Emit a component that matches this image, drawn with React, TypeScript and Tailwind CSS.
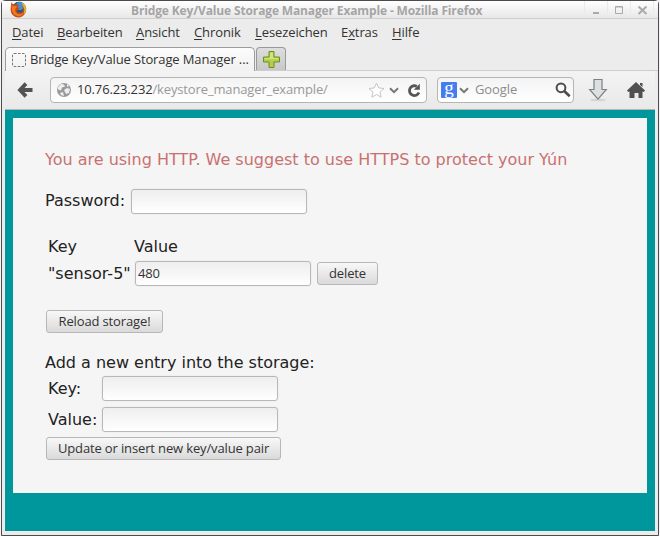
import React from "react";

const field =
  "h-[25px] w-[176px] shrink-0 rounded-[3px] border border-[#b8b8b8] bg-gradient-to-b from-[#eeeeee] to-white px-[2px] pb-[2px] text-[13px] tracking-[-0.14px] text-[#333] shadow-[0_0_0_1px_#f0f0f0] outline-none font-['Open_Sans',sans-serif]";
const button =
  "h-[23px] shrink-0 whitespace-nowrap rounded-[3px] border border-[#b7b7b7] bg-gradient-to-b from-[#f8f8f8] to-[#dadada] text-center text-[13px] leading-[21px] tracking-[-0.14px] text-[#333] font-['Open_Sans',sans-serif]";

function Firefox() {
  return (
    <svg width="17" height="17" viewBox="0 0 17 17" className="shrink-0">
      <circle cx="9" cy="8" r="7.2" fill="#234f8f" />
      <circle cx="10" cy="5" r="4.2" fill="#4b8fc8" />
      <path d="M1.3 1.2 3.2 3.4 6.2 3 8.6 4.2 7.5 6.2 9.6 7.2 7.6 9.6 6.4 10.2 8 11.6 11.8 11.5 13.4 8.2 12.6 4.8 15.8 8.2C16 13 13 16.2 8.6 16.4 3.2 16.3.4 12.2.6 7.4Z" fill="#c54a17" />
      <path d="M1.4 2.8 3 5.2 5.8 4.8 7.2 5.8 5.4 7.6 5.2 10.4 7.5 13 11 13.2 14 11 12.5 14 8.5 15.4 4 13.4 2 9.8Z" fill="#ee7c1d" />
      <path d="M11.5 1.3 14.8 3.6 16.3 7.3 15.8 11 13.8 13.4 14.3 8.3 12.8 4.4Z" fill="#edab30" />
    </svg>
  );
}

function Menu({ w, pre = "", hot, rest }: { w: string; pre?: string; hot: string; rest: string }) {
  return (
    <span className={w + " shrink-0 whitespace-nowrap"}>
      {pre}
      <span className="underline decoration-1 underline-offset-[2px]">{hot}</span>
      {rest}
    </span>
  );
}

function Chevron() {
  return (
    <svg width="10" height="7" viewBox="0 0 10 7" className="shrink-0">
      <path d="m1 1.2 4 4 4-4" fill="none" stroke="#777" strokeWidth="2" />
    </svg>
  );
}

export default function App() {
  return (
    <div className="flex h-[536px] w-[660px] overflow-hidden bg-[#f5f5f5] pl-px font-['Open_Sans',sans-serif] text-[#333]">
      <div className="flex h-[536px] w-[658px] flex-col rounded-t-[4px] border border-[#4d4b4d] bg-[#ececec]">
        <header className="flex h-[18px] shrink-0 items-center border-b border-[#cfcfcf] bg-gradient-to-b from-white via-[#f3f3f3] to-[#e8e8e8] pl-[8px]">
          <Firefox />
          <div className="ml-[104px] w-[353px] shrink-0 whitespace-nowrap pt-px text-[12px] font-bold leading-[17px] tracking-[-0.14px] text-[#a5a5a5]">
            Bridge Key/Value Storage Manager Example - Mozilla Firefox
          </div>
          <svg width="74" height="17" viewBox="0 0 74 17" className="ml-[100px] shrink-0" fill="none" stroke="#aaa">
            <path d="M.5 0v17M23.5 0v17M46.5 0v17M69.5 0v17" stroke="#ebebeb" />
            <path d="M9 12h6" strokeWidth="2" />
            <path d="M31.5 5.5h7v7h-7zM31 6h8" />
            <path d="m54.5 5.5 8 7.500m0-7.500-8 7.500" strokeWidth="2" />
          </svg>
        </header>

        <nav className="flex h-[27px] shrink-0 items-center pl-[10px] text-[13px] leading-[27px] tracking-[-0.1px]">
          <Menu w="w-[45px]" hot="D" rest="atei" />
          <Menu w="w-[79px]" hot="B" rest="earbeiten" />
          <Menu w="w-[58px]" hot="A" rest="nsicht" />
          <Menu w="w-[61px]" hot="C" rest="hronik" />
          <Menu w="w-[86px]" hot="L" rest="esezeichen" />
          <Menu w="w-[51px]" pre="E" hot="x" rest="tras" />
          <Menu w="w-[40px]" hot="H" rest="ilfe" />
        </nav>

        <div className="flex h-[25px] shrink-0 items-end pl-[3px]">
          <div className="flex h-[24px] w-[250px] shrink-0 items-center rounded-t-[5px] border border-b-0 border-[#9b9b9b] bg-gradient-to-b from-[#fcfcfc] to-[#f1f1f1] pl-[6px] text-[13px] tracking-[-0.13px]">
            <svg width="14" height="14" viewBox="0 0 14 14" className="shrink-0">
              <rect x=".5" y=".5" width="13" height="13" rx="1.5" fill="none" stroke="#777" strokeDasharray="2.6 1.4" />
            </svg>
            <span className="ml-[4px] whitespace-nowrap">Bridge Key/Value Storage Manager ...</span>
          </div>
          <div className="flex h-full flex-1 items-end border-b border-[#cdcdcd]">
            <div className="ml-px flex h-[23px] w-[30px] items-center justify-center rounded-t-[4px] border border-b-0 border-[#999] bg-gradient-to-b from-[#dedede] to-[#c8c8c8]">
              <svg width="17" height="17" viewBox="0 0 17 17">
                <path d="M6 .5h5V6h5.500v5H11v5.500H6V11H.5V6H6z" fill="#b5cb49" stroke="#669222" />
                <path d="M7 1.500h3V7h5.500v1.200h-14V7H7z" fill="#d6e27c" />
              </svg>
            </div>
          </div>
        </div>

        <div className="mx-[3px] flex h-[39px] shrink-0 items-center border-b border-[#b5b5b5] bg-gradient-to-b from-[#f3f3f3] to-[#e9e9e9] pl-[12px]">
          <svg width="16" height="16" viewBox="0 0 16 16" className="shrink-0" fill="none" stroke="#535353" strokeWidth="3.8">
            <path d="m9 1.600-6 6.400L9 14.400M3 8h12.500" />
          </svg>
          <div className="ml-[17px] flex h-[26px] w-[377px] shrink-0 items-center rounded-[4px] border border-[#b5b5b5] bg-gradient-to-b from-[#f3f3f3] to-white pl-[6px] text-[13px] tracking-[-0.14px]">
            <svg width="14" height="14" viewBox="0 0 14 14" className="shrink-0">
              <circle cx="7" cy="7" r="7" fill="#999" />
              <path d="m1 4 3-3 3 .5 1 2-3 1-1 3-3-1zm6 3 3-2 3 1-1 4-3 1zM3 10l3-1 1 4-3-1zM10 1l2 2-2 1z" fill="#eee" />
            </svg>
            <span className="ml-[6px] w-[290px] shrink-0 whitespace-nowrap text-[#999]">
              <span className="text-[#333]">10.76.23.232</span>/keystore_manager_example/
            </span>
            <svg width="17" height="16" viewBox="0 0 17 16" className="ml-[1px] shrink-0">
              <path d="m8.500 1 2.200 4.900 5.300.6-4 3.500 1.100 5.200-4.600-2.700-4.600 2.700L5 10 1 6.500l5.300-.6z" fill="#fff" stroke="#c5c5c5" />
            </svg>
            <span className="ml-[4px] flex"><Chevron /></span>
            <svg width="14" height="15" viewBox="0 0 14 15" className="ml-[8px] shrink-0">
              <path d="M9.800 3.400A4.900 4.900 0 1 0 11.900 9.500" fill="none" stroke="#555" strokeWidth="2.8" />
              <path d="M12.800.7v6H6.800z" fill="#555" />
            </svg>
          </div>
          <div className="ml-[10px] flex h-[26px] w-[137px] shrink-0 items-center rounded-[4px] border border-[#b5b5b5] bg-gradient-to-b from-[#f3f3f3] to-white pl-[3px]">
            <span className="flex h-[16px] w-[16px] shrink-0 items-center justify-center rounded-[1px] bg-[#467cf2] pb-[5px] font-['Liberation_Serif',serif] text-[19px] leading-[11px] text-white">g</span>
            <span className="ml-[2px] flex"><Chevron /></span>
            <span className="ml-[6px] w-[80px] text-[13px] tracking-[-0.1px] text-[#8d8d8d]">Google</span>
            <svg width="16" height="16" viewBox="0 0 16 16" className="shrink-0" fill="none" stroke="#4c4c4c">
              <circle cx="6" cy="5.8" r="4.4" strokeWidth="2" />
              <path d="m9.200 9 5.500 5.200" strokeWidth="2.6" />
            </svg>
          </div>
          <svg width="20" height="24" viewBox="0 0 20 24" className="ml-[14px] shrink-0">
            <ellipse cx="10" cy="22" rx="8" ry="1.3" fill="#d5d5d5" />
            <path d="M6 1.500h8v10h4.300L10 21.200 1.700 11.500H6z" fill="#dde0e0" stroke="#7d8080" strokeWidth="1.2" />
          </svg>
          <svg width="18" height="17" viewBox="0 0 18 17" className="ml-[19px] shrink-0" fill="#505050">
            <path d="m9 0 9 8.600-.9 1.200H15.500V16h-4v-5h-4v5h-5V9.800H.9L0 8.600z" />
            <path d="M13 1h2.500v4L13 3z" />
          </svg>
        </div>

        <main className="mx-[3px] mb-[4px] h-[421px] bg-[#00979c] px-[8px] pt-[8px] text-[16px] text-[#222] font-['DejaVu_Sans',sans-serif]">
          <section className="flex h-[375px] w-[634px] flex-col bg-[#f5f5f5] pl-[32px] pt-[32px]">
            <p className="h-[19px] whitespace-nowrap leading-[19px] text-[#c87171]">
              You are using HTTP. We suggest to use HTTPS to protect your Yún
            </p>
            <label className="mt-[20px] flex h-[25px] leading-[23px]">
              <span className="w-[86px] shrink-0">Password:</span>
              <input type="password" className={field} />
            </label>
            <div className="mt-[23px] flex h-[19px] pl-[3px] leading-[19px]">
              <span className="w-[86px]">Key</span>
              <span>Value</span>
            </div>
            <div className="mt-[5px] flex h-[25px] items-center pl-[3px]">
              <span className="w-[87px] shrink-0 whitespace-nowrap">"sensor-5"</span>
              <input defaultValue="480" className={field} />
              <button className={button + " ml-[6px] w-[61px]"}>delete</button>
            </div>
            <button className={button + " ml-px mt-[24px] w-[117px]"}>Reload storage!</button>
            <p className="mt-[20px] h-[19px] leading-[19px]">Add a new entry into the storage:</p>
            <label className="mt-[4px] flex h-[25px] pl-[3px] leading-[25px]">
              <span className="w-[54px] shrink-0">Key:</span>
              <input className={field} />
            </label>
            <label className="mt-[6px] flex h-[25px] pl-[3px] leading-[25px]">
              <span className="w-[54px] shrink-0">Value:</span>
              <input className={field} />
            </label>
            <button className={button + " ml-px mt-[5px] w-[235px]"}>Update or insert new key/value pair</button>
          </section>
        </main>
      </div>
    </div>
  );
}
